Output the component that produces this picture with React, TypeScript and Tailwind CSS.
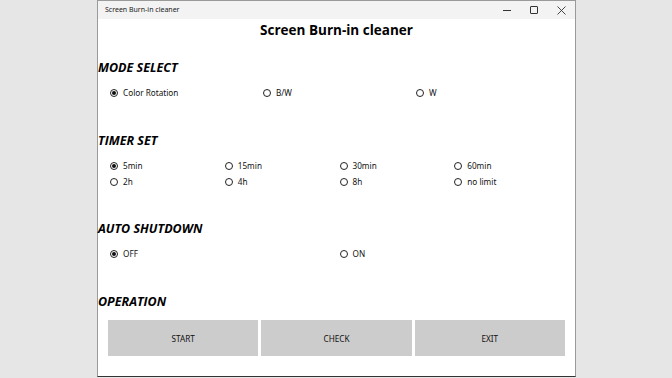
import React from "react";

const font = { fontFamily: '"Open Sans", "Noto Sans", sans-serif' };
const small = { fontFamily: '"Noto Sans", "Open Sans", sans-serif' };

function Radio({ label, checked }: { label: string; checked?: boolean }) {
  return (
    <div className="flex items-center h-[16px]">
      <span className="w-[8px] h-[8px] rounded-full border border-[#222] flex items-center justify-center mr-[5px] ml-[2px]">
        {checked && <span className="w-[4px] h-[4px] rounded-full bg-[#111]" />}
      </span>
      <span className="text-[8.2px] text-[#111] leading-none" style={small}>{label}</span>
    </div>
  );
}

function Heading({ children, mt }: { children: React.ReactNode; mt: string }) {
  return (
    <div className={`h-[16px] flex items-center text-[12.5px] font-bold italic text-black leading-none ${mt}`}>
      {children}
    </div>
  );
}

export default function App() {
  return (
    <div className="w-[672px] h-[378px] bg-[#e6e6e6] overflow-hidden" style={font}>
      <div className="ml-[97px] w-[479px] h-[377px] bg-white border border-[#9a9a9a] border-b-[#333] flex flex-col">
        <div className="h-[18px] bg-[#f3f3f3] flex items-center pl-[7px] shrink-0">
          <span className="text-[7px] text-[#222]" style={small}>Screen Burn-in cleaner</span>
          <div className="ml-auto flex items-center h-full">
            <div className="w-[27px] flex justify-center">
              <div className="w-[8px] h-px bg-[#333]" />
            </div>
            <div className="w-[27px] flex justify-center">
              <div className="w-[8px] h-[8px] border border-[#333] rounded-[1px]" />
            </div>
            <div className="w-[28px] flex justify-center">
              <svg width="9" height="9" viewBox="0 0 9 9">
                <path d="M0.5 0.5 L8.5 8.5 M8.5 0.5 L0.5 8.5" stroke="#333" strokeWidth="0.9" />
              </svg>
            </div>
          </div>
        </div>
        <div className="mt-[1px] h-[22px] flex items-center justify-center text-[13.5px] font-bold text-black leading-none">
          Screen Burn-in cleaner
        </div>
        <Heading mt="mt-[18px]">MODE SELECT</Heading>
        <div className="mt-[9px] pl-[10px] pr-[8px] grid grid-cols-3">
          <Radio label="Color Rotation" checked />
          <Radio label="B/W" />
          <Radio label="W" />
        </div>
        <Heading mt="mt-[32px]">TIMER SET</Heading>
        <div className="mt-[9px] pl-[10px] pr-[8px] grid grid-cols-4">
          <Radio label="5min" checked />
          <Radio label="15min" />
          <Radio label="30min" />
          <Radio label="60min" />
          <Radio label="2h" />
          <Radio label="4h" />
          <Radio label="8h" />
          <Radio label="no limit" />
        </div>
        <Heading mt="mt-[31px]">AUTO SHUTDOWN</Heading>
        <div className="mt-[9px] pl-[10px] pr-[8px] grid grid-cols-2">
          <Radio label="OFF" checked />
          <Radio label="ON" />
        </div>
        <Heading mt="mt-[32px]">OPERATION</Heading>
        <div className="mt-[10px] pl-[10px] pr-[10px] grid grid-cols-3 gap-[3px]">
          {["START", "CHECK", "EXIT"].map((t) => (
            <div key={t} className="h-[36px] pt-[2px] bg-[#cccccc] flex items-center justify-center text-[8.2px] text-[#111]" style={small}>
              {t}
            </div>
          ))}
        </div>
      </div>
    </div>
  );
}
